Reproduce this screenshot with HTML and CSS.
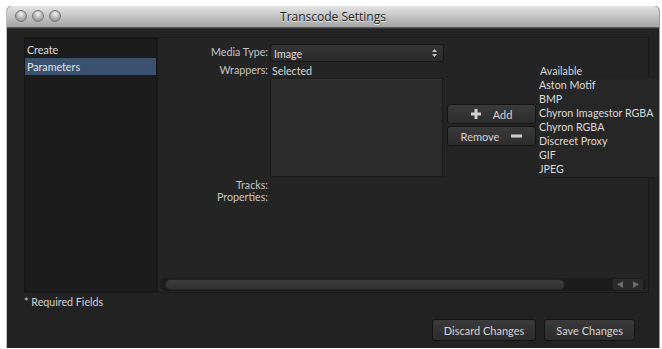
FILE: index.html
```html
<!DOCTYPE html>
<html lang="en">
<head>
    <meta charset="UTF-8">
    <title>Transcode Settings</title>
    <link rel="stylesheet" href="styles.css">
</head>
<body>

    <div class="window">
        <div class="titlebar">
            <div class="lights">
                <span class="light"></span>
                <span class="light"></span>
                <span class="light"></span>
            </div>
            <div class="title">Transcode Settings</div>
        </div>

        <div class="content">
            <div class="main">
                <ul class="sidebar">
                    <li>Create</li>
                    <li class="selected">Parameters</li>
                </ul>

                <div class="panel">
                    <div class="form">
                        <div class="label label-media">Media Type:</div>
                        <div class="field">
                            <div class="select">
                                <span>Image</span>
                                <span class="arrows">
                                    <svg width="5" height="8" viewBox="0 0 5 8"><path d="M2.5 0 L5 3 H0 Z M2.5 8 L5 5 H0 Z" fill="#c8c8c8"/></svg>
                                </span>
                            </div>
                        </div>

                        <div class="label">Wrappers:</div>
                        <div class="field wrappers">
                            <div class="col-selected">
                                <div class="col-head">Selected</div>
                                <div class="listbox"></div>
                            </div>
                            <div class="col-buttons">
                                <button class="btn btn-small">
                                    <svg width="10" height="10" viewBox="0 0 10 10"><path d="M3.5 0 H6.5 V3.5 H10 V6.5 H6.5 V10 H3.5 V6.5 H0 V3.5 H3.5 Z" fill="#d0d0d0"/></svg>
                                    <span class="btn-text">Add</span>
                                </button>
                                <button class="btn btn-small">
                                    <span class="btn-text">Remove</span>
                                    <svg width="11" height="4" viewBox="0 0 11 4"><rect width="11" height="3" y="0.5" fill="#d0d0d0"/></svg>
                                </button>
                            </div>
                            <div class="col-available">
                                <div class="col-head">Available</div>
                                <ul class="available">
                                    <li>Aston Motif</li>
                                    <li>BMP</li>
                                    <li>Chyron Imagestor RGBA</li>
                                    <li>Chyron RGBA</li>
                                    <li>Discreet Proxy</li>
                                    <li>GIF</li>
                                    <li>JPEG</li>
                                </ul>
                            </div>
                        </div>

                        <div class="label">Tracks:</div>
                        <div class="field"></div>

                        <div class="label">Properties:</div>
                        <div class="field"></div>
                    </div>

                    <div class="scrollbar">
                        <div class="thumb"></div>
                        <div class="scroll-arrows">
                            <svg width="6" height="7" viewBox="0 0 6 7"><path d="M0 3.5 L6 0 V7 Z" fill="#6a6a6a"/></svg>
                            <svg width="6" height="7" viewBox="0 0 6 7"><path d="M6 3.5 L0 0 V7 Z" fill="#6a6a6a"/></svg>
                        </div>
                    </div>
                </div>
            </div>

            <div class="required">* Required Fields</div>

            <div class="footer">
                <button class="btn btn-footer">Discard Changes</button>
                <button class="btn btn-footer">Save Changes</button>
            </div>
        </div>
    </div>

</body>
</html>
```

FILE: styles.css
```css
:root {
    --window-bg: #222222;
    --panel-bg: #242424;
    --sidebar-bg: #1c1c1c;
    --list-bg: #2b2b2b;
    --text-color: #d6d6d6;
    --label-color: #c4c4c4;
    --border-dark: #151515;
    --select-blue: #3b5170;
}

body {
    margin: 0;
    padding: 0;
    background: #ffffff;
    font-family: Lato, "Open Sans", sans-serif;
    font-size: 10.7px;
    color: var(--text-color);
}

.window {
    margin: 6px 3px 0 7px;
    width: 652px;
    height: 342px;
    background: var(--window-bg);
    border-radius: 5px 5px 0 0;
    overflow: hidden;
    display: flex;
    flex-direction: column;
    box-shadow: 1px 0 0 #9a9a9a, -1px 0 0 #bdbdbd;
}

/* Title bar */
.titlebar {
    height: 21px;
    flex-shrink: 0;
    background: linear-gradient(#e4e4e4, #c4c4c4 50%, #a4a4a4);
    border-bottom: 1px solid #5a5a5a;
    position: relative;
    display: flex;
    align-items: center;
    justify-content: center;
}

.lights {
    position: absolute;
    left: 8px;
    top: 4px;
    display: flex;
    gap: 5px;
}

.light {
    width: 12px;
    height: 12px;
    border-radius: 50%;
    background: radial-gradient(circle at 50% 30%, #f4f4f4, #a9a9a9 60%, #8a8a8a);
    border: 1px solid #777;
    box-sizing: border-box;
}

.title {
    font-family: "Open Sans", Lato, sans-serif;
    font-size: 12px;
    color: #1e1e1e;
    text-shadow: 0 1px 0 #e8e8e8;
}

/* Content */
.content {
    flex: 1;
    display: flex;
    flex-direction: column;
    padding: 8px 10px 0 17px;
    border-top: 1px solid #333;
}

.main {
    display: flex;
    height: 254px;
    border: 1px solid #1a1a1a;
    border-left: none;
}

.sidebar {
    list-style: none;
    margin: 0;
    padding: 2px 0 0 0;
    width: 133px;
    flex-shrink: 0;
    background: var(--sidebar-bg);
    border: 1px solid #151515;
    box-sizing: border-box;
}

.sidebar li {
    height: 17px;
    line-height: 17px;
    padding-left: 2px;
    color: #dcdcdc;
}

.sidebar li.selected {
    background: var(--select-blue);
    color: #e4e4e4;
}

.panel {
    flex: 1;
    min-width: 0;
    background: var(--panel-bg);
    display: flex;
    flex-direction: column;
    border-left: 1px solid #1a1a1a;
}

.form {
    flex: 1;
    display: grid;
    grid-template-columns: 112px 1fr;
    align-content: start;
    padding-top: 6px;
}

.label {
    text-align: right;
    color: var(--label-color);
    padding-right: 2px;
    line-height: 12px;
}

.label-media {
    padding-top: 1px;
    line-height: 13px;
}

.field {
    min-height: 12px;
}

.select {
    width: 174px;
    height: 18px;
    box-sizing: border-box;
    background: linear-gradient(#353535, #2a2a2a);
    border: 1px solid #161616;
    border-radius: 3px;
    display: flex;
    align-items: center;
    justify-content: space-between;
    padding: 0 6px 0 3px;
    color: #dedede;
    margin-bottom: 2px;
}

.arrows {
    display: flex;
}

.wrappers {
    display: flex;
    line-height: 13px;
    margin-bottom: 1px;
}

.col-head {
    height: 14px;
    padding-left: 2px;
}

.listbox {
    width: 173px;
    height: 99px;
    box-sizing: border-box;
    background: var(--list-bg);
    border: 1px solid #1b1b1b;
    box-shadow: inset 0 1px 0 #333;
}

.col-buttons {
    width: 95px;
    flex-shrink: 0;
    display: flex;
    flex-direction: column;
    gap: 2px;
    padding: 40px 2px 0 4px;
    box-sizing: border-box;
}

.btn {
    font-family: inherit;
    font-size: 11px;
    color: #d4d4d4;
    background: linear-gradient(#3a3a3a, #2c2c2c);
    border: 1px solid #141414;
    border-radius: 3px;
    display: flex;
    align-items: center;
    justify-content: center;
    padding: 0;
}

.btn-small {
    height: 20px;
    gap: 12px;
}

.col-available {
    width: 125px;
    flex-shrink: 0;
}

.available {
    list-style: none;
    margin: 0;
    padding: 0;
    height: 99px;
    background: #262626;
    border-bottom: 1px solid #1c1c1c;
}

.available li {
    height: 14px;
    line-height: 14px;
    padding-left: 1px;
    white-space: nowrap;
    color: #dadada;
}

/* Horizontal scrollbar */
.scrollbar {
    height: 13px;
    margin: 0 2px 1px 2px;
    background: #1c1c1c;
    border-radius: 6px;
    display: flex;
    align-items: center;
    justify-content: space-between;
    padding: 0 3px 0 5px;
}

.thumb {
    width: 400px;
    height: 11px;
    border-radius: 6px;
    background: linear-gradient(#3d3d3d, #303030);
    border: 1px solid #222;
    box-sizing: border-box;
}

.scroll-arrows {
    display: flex;
    gap: 10px;
    padding: 0 4px;
    background: #2a2a2a;
    height: 11px;
    align-items: center;
}

.required {
    padding: 2px 0 0 0;
    color: #d2d2d2;
    line-height: 14px;
}

.footer {
    display: flex;
    justify-content: flex-end;
    gap: 8px;
    padding: 10px 14px 0 0;
}

.btn-footer {
    height: 22px;
    padding: 0 11px;
}
```
